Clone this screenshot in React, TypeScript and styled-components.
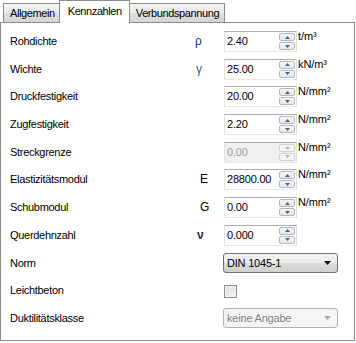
import React from "react";
import styled, { createGlobalStyle, css } from "styled-components";

const Global = createGlobalStyle`
  html, body { margin: 0; padding: 0; background: #ffffff; }
  body { font-family: "Liberation Sans", Arial, sans-serif; font-size: 11px; color: #000; }
`;

const Wrap = styled.div`
  width: 356px;
  height: 343px;
  position: relative;
  background: #fff;
`;

const TabStrip = styled.div`
  display: flex;
  align-items: flex-end;
  height: 22px;
  padding-left: 3px;
  position: relative;
  z-index: 2;
`;

const Tab = styled.div<{ $active?: boolean }>`
  box-sizing: border-box;
  height: 19px;
  padding: 0 5px 0 6px;
  display: flex;
  align-items: center;
  border: 1px solid #898c95;
  border-bottom: none;
  background: linear-gradient(#f3f3f3, #ebebeb 50%, #dddddd 51%, #d6d6d6);
  letter-spacing: -0.4px;
  margin-right: -1px;
  ${(p) =>
    p.$active &&
    css`
      height: 23px;
      margin-bottom: -1px;
      padding: 0 7px 3px 8px;
      background: #fff;
      margin-left: -1px;
      margin-right: -1px;
      position: relative;
      z-index: 3;
    `}
`;

const Panel = styled.div`
  box-sizing: border-box;
  width: 355px;
  height: 319px;
  border: 1px solid #898c95;
  background: #fff;
  padding: 8px 0 0 9px;
  display: flex;
  flex-direction: column;
`;

const Row = styled.div`
  display: grid;
  grid-template-columns: 185px 29px 73px auto;
  height: 27.7px;
  align-items: start;
`;

const Label = styled.div`
  line-height: 21px;
  height: 21px;
  letter-spacing: -0.3px;
  white-space: nowrap;
`;

const Symbol = styled.div<{ $color?: string; $bold?: boolean; $shift?: number }>`
  line-height: 21px;
  height: 21px;
  color: ${(p) => p.$color || "#000"};
  font-weight: ${(p) => (p.$bold ? "bold" : "normal")};
  padding-left: ${(p) => p.$shift ?? 0}px;
  font-size: 12px;
`;

const SpinBox = styled.div<{ $disabled?: boolean }>`
  box-sizing: border-box;
  width: 73px;
  height: 21px;
  border: 1px solid;
  border-color: #abadb3 #dbdfe6 #e3e9ef #e2e3ea;
  background: ${(p) => (p.$disabled ? "#f0f0f0" : "#fff")};
  display: flex;
  align-items: stretch;
  padding: 1px 1px 1px 0;
`;

const Value = styled.div<{ $disabled?: boolean }>`
  flex: 1;
  padding-left: 2px;
  line-height: 17px;
  letter-spacing: -0.2px;
  color: ${(p) => (p.$disabled ? "#9a9a9a" : "#000")};
`;

const Spinner = styled.div`
  width: 16px;
  display: flex;
  flex-direction: column;
  gap: 1px;
`;

const SpinBtn = styled.div<{ $disabled?: boolean }>`
  flex: 1;
  box-sizing: border-box;
  border: 1px solid ${(p) => (p.$disabled ? "#d0d2d5" : "#b4b8c0")};
  border-radius: 2px;
  background: ${(p) =>
    p.$disabled ? "#f4f4f4" : "linear-gradient(#f8f8f8, #e6e6e6)"};
  display: flex;
  align-items: center;
  justify-content: center;
`;

const Unit = styled.div`
  padding-left: 1px;
  line-height: 12px;
  margin-top: -1px;
  white-space: nowrap;
  letter-spacing: -0.1px;
`;

const Select = styled.div<{ $disabled?: boolean }>`
  box-sizing: border-box;
  margin-left: -1px;
  width: 115px;
  height: 20px;
  border: 1px solid ${(p) => (p.$disabled ? "#adb2b5" : "#707070")};
  border-radius: 3px;
  background: ${(p) =>
    p.$disabled
      ? "#f4f4f4"
      : "linear-gradient(#f2f2f2, #ebebeb 50%, #dddddd 51%, #cfcfcf)"};
  color: ${(p) => (p.$disabled ? "#838383" : "#000")};
  display: flex;
  align-items: center;
  justify-content: space-between;
  padding: 0 6px 0 3px;
  letter-spacing: -0.2px;
  grid-column: 3 / span 2;
`;

const Check = styled.div`
  box-sizing: border-box;
  width: 13px;
  height: 13px;
  margin-top: 5px;
  border: 1px solid #8e8f8f;
  background: linear-gradient(135deg, #d8d8d8, #f6f6f6);
  box-shadow: inset 0 0 0 1px #f4f4f4;
`;

const Arrow = ({ up, color }: { up?: boolean; color: string }) => (
  <svg width="7" height="4" viewBox="0 0 7 4">
    <path d={up ? "M0 4 L3.5 0 L7 4 Z" : "M0 0 L7 0 L3.5 4 Z"} fill={color} />
  </svg>
);

const SmallArrow = ({ up, color }: { up?: boolean; color: string }) => (
  <svg width="5" height="3" viewBox="0 0 5 3">
    <path d={up ? "M0 3 L2.5 0 L5 3 Z" : "M0 0 L5 0 L2.5 3 Z"} fill={color} />
  </svg>
);

type Item = {
  label: string;
  sym?: string;
  symColor?: string;
  bold?: boolean;
  shift?: number;
  value: string;
  unit?: string;
  disabled?: boolean;
};

const items: Item[] = [
  { label: "Rohdichte", sym: "ρ", symColor: "#1d2a55", value: "2.40", unit: "t/m³", shift: 0 },
  { label: "Wichte", sym: "γ", symColor: "#3b5c98", value: "25.00", unit: "kN/m³", shift: 1 },
  { label: "Druckfestigkeit", value: "20.00", unit: "N/mm²" },
  { label: "Zugfestigkeit", value: "2.20", unit: "N/mm²" },
  { label: "Streckgrenze", value: "0.00", unit: "N/mm²", disabled: true },
  { label: "Elastizitätsmodul", sym: "E", value: "28800.00", unit: "N/mm²", shift: 5 },
  { label: "Schubmodul", sym: "G", value: "0.00", unit: "N/mm²", shift: 5 },
  { label: "Querdehnzahl", sym: "ν", symColor: "#1d2a55", bold: true, value: "0.000", shift: 2 },
];

export default function App() {
  return (
    <Wrap>
      <Global />
      <TabStrip>
        <Tab>Allgemein</Tab>
        <Tab $active>Kennzahlen</Tab>
        <Tab>Verbundspannung</Tab>
      </TabStrip>
      <Panel>
        {items.map((it) => (
          <Row key={it.label}>
            <Label>{it.label}</Label>
            <Symbol $color={it.symColor} $bold={it.bold} $shift={it.shift}>
              {it.sym ?? ""}
            </Symbol>
            <SpinBox $disabled={it.disabled}>
              <Value $disabled={it.disabled}>{it.value}</Value>
              <Spinner>
                <SpinBtn $disabled={it.disabled}>
                  <SmallArrow up color={it.disabled ? "#b8b8b8" : "#4d6185"} />
                </SpinBtn>
                <SpinBtn $disabled={it.disabled}>
                  <SmallArrow color={it.disabled ? "#b8b8b8" : "#4d6185"} />
                </SpinBtn>
              </Spinner>
            </SpinBox>
            <Unit>{it.unit ?? ""}</Unit>
          </Row>
        ))}
        <Row>
          <Label>Norm</Label>
          <Symbol />
          <Select>
            <span>DIN 1045-1</span>
            <Arrow color="#000" />
          </Select>
        </Row>
        <Row>
          <Label>Leichtbeton</Label>
          <Symbol />
          <Check />
        </Row>
        <Row>
          <Label>Duktilitätsklasse</Label>
          <Symbol />
          <Select $disabled>
            <span>keine Angabe</span>
            <Arrow color="#a8a8a8" />
          </Select>
        </Row>
      </Panel>
    </Wrap>
  );
}
